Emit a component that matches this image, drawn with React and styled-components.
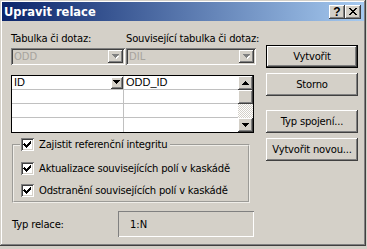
import React from "react";
import styled, { createGlobalStyle } from "styled-components";

const GlobalStyle = createGlobalStyle`
  html, body {
    margin: 0;
    padding: 0;
    background: #d4d0c8;
  }
  body {
    font-family: "DejaVu Sans", "Liberation Sans", sans-serif;
    font-size: 10px;
    color: #000;
  }
`;

const raised = `
  box-shadow: inset -1px -1px #404040, inset 1px 1px #ffffff,
    inset -2px -2px #808080, inset 2px 2px #d4d0c8;
`;

const sunken = `
  box-shadow: inset 1px 1px #808080, inset -1px -1px #ffffff,
    inset 2px 2px #404040, inset -2px -2px #d4d0c8;
`;

const Window = styled.div`
  width: 366px;
  height: 246px;
  box-sizing: border-box;
  padding: 2px;
  background: #d4d0c8;
  box-shadow: inset -1px -1px #404040, inset 1px 1px #d4d0c8,
    inset -2px -2px #808080, inset 2px 2px #ffffff;
  display: flex;
  flex-direction: column;
`;

const TitleBar = styled.div`
  height: 19px;
  background: linear-gradient(to right, #0a246a, #a6caf0);
  display: flex;
  align-items: center;
  justify-content: space-between;
  padding: 0 3px 0 2px;
`;

const Caption = styled.div`
  color: #fff;
  font-weight: bold;
  font-size: 11.5px;
`;

const CaptionButtons = styled.div`
  display: flex;
`;

const CaptionButton = styled.div`
  width: 16px;
  height: 14px;
  box-sizing: border-box;
  background: #d4d0c8;
  ${raised}
  display: flex;
  align-items: center;
  justify-content: center;
  font-family: "Liberation Sans", sans-serif;
  font-weight: bold;
  font-size: 12px;
  line-height: 14px;
`;

const Body = styled.div`
  display: flex;
  gap: 10px;
  padding: 11px 0 0 9px;
`;

const LeftColumn = styled.div`
  width: 245px;
  display: flex;
  flex-direction: column;
`;

const Pair = styled.div`
  display: grid;
  grid-template-columns: 114px 130px;
  column-gap: 1px;
  margin-top: ${(p) => p.$top || 0}px;
`;

const Label = styled.div`
  line-height: 13px;
  letter-spacing: -0.2px;
  white-space: nowrap;
`;

const Combo = styled.div`
  height: 17px;
  box-sizing: border-box;
  padding: 2px;
  background: #d4d0c8;
  ${sunken}
  display: flex;
  align-items: center;
  justify-content: space-between;
`;

const ComboText = styled.span`
  color: #a7a49e;
  padding-left: 1px;
  line-height: 13px;
`;

const ArrowButton = styled.div`
  width: ${(p) => p.$w || 15}px;
  height: ${(p) => p.$h || 13}px;
  box-sizing: border-box;
  background: #d4d0c8;
  ${raised}
  display: flex;
  align-items: center;
  justify-content: center;
  flex-shrink: 0;
`;

const GridBox = styled.div`
  width: 243px;
  height: 58px;
  box-sizing: border-box;
  margin-top: 10px;
  border: 1px solid #000;
  display: flex;
  background: #fff;
`;

const Table = styled.div`
  flex: 1;
  display: flex;
  flex-direction: column;
`;

const Row = styled.div`
  height: 14px;
  box-sizing: border-box;
  border-bottom: 1px solid #c0c0c0;
  display: grid;
  grid-template-columns: 112px 1fr;
  &:last-child {
    border-bottom: none;
  }
`;

const Cell = styled.div`
  display: flex;
  align-items: center;
  justify-content: space-between;
  padding-left: 2px;
  border-right: ${(p) => (p.$first ? "1px solid #c0c0c0" : "none")};
  font-family: "Liberation Sans", sans-serif;
  font-size: 11px;
  line-height: 13px;
  overflow: hidden;
`;

const ScrollBar = styled.div`
  width: 15px;
  display: flex;
  flex-direction: column;
`;

const ScrollTrack = styled.div`
  height: 14px;
  background: repeating-conic-gradient(#ffffff 0 25%, #d4d0c8 0 50%) 0 0 /
    2px 2px;
`;

const GroupBox = styled.fieldset`
  width: 238px;
  box-sizing: border-box;
  margin: 5px 0 0 1px;
  padding: 11px 0 4px 5px;
  border: 2px groove #f0eee9;
  min-width: 0;
  display: flex;
  flex-direction: column;
  gap: 9px;
`;

const Legend = styled.legend`
  padding: 0 3px 0 1px;
  margin-left: 1px;
`;

const CheckRow = styled.label`
  display: flex;
  align-items: center;
  gap: 5px;
  height: 13px;
  margin-left: ${(p) => p.$indent || 0}px;
  white-space: nowrap;
  letter-spacing: -0.2px;
`;

const CheckBox = styled.span`
  width: 13px;
  height: 13px;
  box-sizing: border-box;
  background: #fff;
  ${sunken}
  display: inline-flex;
  flex-shrink: 0;
`;

const TypeRow = styled.div`
  display: flex;
  align-items: center;
  margin: 8px 0 0 1px;
`;

const TypeLabel = styled.div`
  width: 106px;
  letter-spacing: -0.2px;
`;

const TypeValue = styled.div`
  width: 136px;
  height: 26px;
  box-sizing: border-box;
  box-shadow: inset 1px 1px #808080, inset -1px -1px #ffffff;
  display: flex;
  align-items: center;
  padding-left: 12px;
`;

const ButtonColumn = styled.div`
  display: flex;
  flex-direction: column;
  padding-top: 13px;
`;

const Button = styled.div`
  width: 92px;
  height: 23px;
  box-sizing: border-box;
  margin-top: ${(p) => p.$gap || 0}px;
  background: #d4d0c8;
  display: flex;
  align-items: center;
  justify-content: center;
  white-space: nowrap;
  letter-spacing: -0.2px;
  ${raised}
  ${(p) =>
    p.$default &&
    `box-shadow: inset 0 0 0 1px #000, inset -2px -2px #404040, inset 2px 2px #ffffff,
      inset -3px -3px #808080, inset 3px 3px #d4d0c8;`}
`;

function DownArrow({ color = "#000", shadow }) {
  return (
    <svg width="8" height="5" viewBox="0 0 8 5" shapeRendering="crispEdges">
      {shadow && <path d="M2 2h5v1h-1v1h-1v1h-1v-1h-1v-1h-1z" fill="#fff" />}
      <path d="M0 0h7v1h-1v1h-1v1h-1v1h-1v-1h-1v-1h-1v-1h-1z" fill={color} />
    </svg>
  );
}

function UpArrow() {
  return (
    <svg width="7" height="4" viewBox="0 0 7 4" shapeRendering="crispEdges">
      <path d="M3 0h1v1h1v1h1v1h1v1h-7v-1h1v-1h1v-1h1z" fill="#000" />
    </svg>
  );
}

function CloseGlyph() {
  return (
    <svg width="8" height="7" viewBox="0 0 8 7" shapeRendering="crispEdges">
      <path
        d="M0 0h2v1h1v1h2v-1h1v-1h2v1h-1v1h-1v1h-1v1h1v1h1v1h1v1h-2v-1h-1v-1h-2v1h-1v1h-2v-1h1v-1h1v-1h1v-1h-1v-1h-1v-1h-1z"
        fill="#000"
      />
    </svg>
  );
}

function Check() {
  return (
    <svg width="13" height="13" viewBox="0 0 13 13" shapeRendering="crispEdges">
      <path
        d="M3 5h1v1h1v1h1v-1h1v-1h1v-1h1v-1h1v3h-1v1h-1v1h-1v1h-1v1h-1v-1h-1v-1h-1v-1h-1z"
        fill="#000"
      />
    </svg>
  );
}

function CheckItem({ children, indent }) {
  return (
    <CheckRow $indent={indent}>
      <CheckBox>
        <Check />
      </CheckBox>
      {children}
    </CheckRow>
  );
}

export default function App() {
  return (
    <>
      <GlobalStyle />
      <Window>
        <TitleBar>
          <Caption>Upravit relace</Caption>
          <CaptionButtons>
            <CaptionButton>?</CaptionButton>
            <CaptionButton>
              <CloseGlyph />
            </CaptionButton>
          </CaptionButtons>
        </TitleBar>
        <Body>
          <LeftColumn>
            <Pair>
              <Label>Tabulka či dotaz:</Label>
              <Label>Související tabulka či dotaz:</Label>
            </Pair>
            <Pair $top={3}>
              <Combo>
                <ComboText>ODD</ComboText>
                <ArrowButton>
                  <DownArrow color="#808080" shadow />
                </ArrowButton>
              </Combo>
              <Combo>
                <ComboText>DIL</ComboText>
                <ArrowButton>
                  <DownArrow color="#808080" shadow />
                </ArrowButton>
              </Combo>
            </Pair>
            <GridBox>
              <Table>
                <Row>
                  <Cell $first>
                    ID
                    <ArrowButton $w={12} $h={12}>
                      <DownArrow />
                    </ArrowButton>
                  </Cell>
                  <Cell>ODD_ID</Cell>
                </Row>
                <Row>
                  <Cell $first />
                  <Cell />
                </Row>
                <Row>
                  <Cell $first />
                  <Cell />
                </Row>
                <Row>
                  <Cell $first />
                  <Cell />
                </Row>
              </Table>
              <ScrollBar>
                <ArrowButton $w={15} $h={14}>
                  <UpArrow />
                </ArrowButton>
                <ArrowButton $w={15} $h={14} />
                <ScrollTrack />
                <ArrowButton $w={15} $h={14}>
                  <DownArrow />
                </ArrowButton>
              </ScrollBar>
            </GridBox>
            <GroupBox>
              <Legend>
                <CheckItem>Zajistit referenční integritu</CheckItem>
              </Legend>
              <CheckItem indent={2}>Aktualizace souvisejících polí v kaskádě</CheckItem>
              <CheckItem indent={2}>Odstranění souvisejících polí v kaskádě</CheckItem>
            </GroupBox>
            <TypeRow>
              <TypeLabel>Typ relace:</TypeLabel>
              <TypeValue>1:N</TypeValue>
            </TypeRow>
          </LeftColumn>
          <ButtonColumn>
            <Button $default>Vytvořit</Button>
            <Button $gap={5}>Storno</Button>
            <Button $gap={14}>Typ spojení...</Button>
            <Button $gap={5}>Vytvořit novou...</Button>
          </ButtonColumn>
        </Body>
      </Window>
    </>
  );
}
